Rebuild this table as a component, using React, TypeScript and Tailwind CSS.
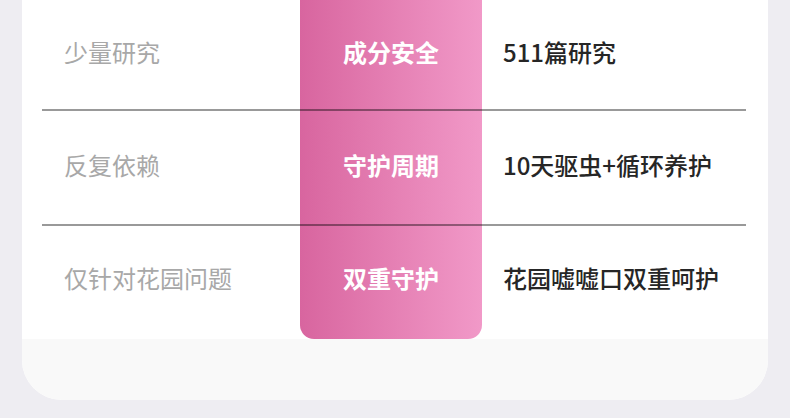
const rows = [
  { left: '少量研究', mid: '成分安全', right: '511篇研究' },
  { left: '反复依赖', mid: '守护周期', right: '10天驱虫+循环养护' },
  { left: '仅针对花园问题', mid: '双重守护', right: '花园嘘嘘口双重呵护' },
];

export default function App() {
  return (
    <div
      className="w-[790px] h-[418px] bg-[#eeedf2] px-[22px] overflow-hidden"
      style={{ fontFamily: '"Noto Sans CJK SC", "Noto Sans", sans-serif' }}
    >
      <div className="bg-white rounded-b-[40px] overflow-hidden">
        <div className="pl-[20px] pr-[22px]">
          {rows.map((row, i) => {
            const last = i === rows.length - 1;
            const border = last ? '' : 'border-b-2 border-black/40';
            const height = i === 0 ? 'h-[111px]' : last ? 'h-[113px]' : 'h-[115px]';
            const pad = last ? 'pb-[9px]' : 'pb-[6px]';
            return (
              <div key={row.mid} className={`grid grid-cols-[258px_182px_1fr] ${height}`}>
                <div className={`flex items-center pl-[22px] ${pad} text-[24px] text-[#a8a8a8] ${border}`}>
                  {row.left}
                </div>
                <div
                  className={`flex items-center justify-center ${pad} text-[24px] font-bold text-white bg-linear-to-r from-[#d8659f] to-[#f199c8] ${border} ${
                    last ? 'rounded-b-[14px]' : ''
                  }`}
                >
                  {row.mid}
                </div>
                <div className={`flex items-center pl-[21px] ${pad} text-[24px] font-medium text-[#262626] ${border}`}>
                  {row.right}
                </div>
              </div>
            );
          })}
        </div>
        <div className="h-[61px] bg-[#f9f9f9]" />
      </div>
    </div>
  );
}
